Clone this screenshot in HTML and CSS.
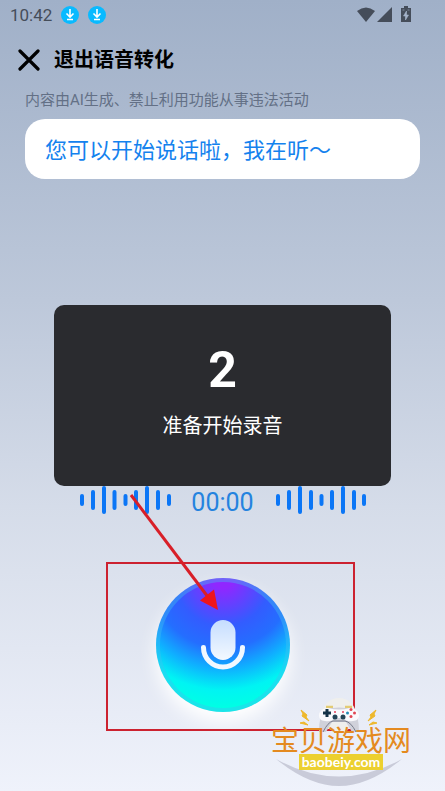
FILE: index.html
```html
<!DOCTYPE html>
<html lang="zh-CN">
<head>
    <meta charset="UTF-8">
    <meta name="viewport" content="width=device-width, initial-scale=1.0">
    <title>退出语音转化</title>
    <link rel="stylesheet" href="styles.css">
</head>
<body>
    <div class="status-bar">
        <span class="clock">10:42</span>
        <svg class="download" viewBox="0 0 18 18">
            <circle cx="9" cy="9" r="9" fill="#09baff"/>
            <path d="M9 3v7.500M5.500 7.500L9 11l3.500-3.500M6 13.500h6" fill="none" stroke="#fff" stroke-width="1.600"/>
        </svg>
        <svg class="download" viewBox="0 0 18 18">
            <circle cx="9" cy="9" r="9" fill="#09baff"/>
            <path d="M9 3v7.500M5.500 7.500L9 11l3.500-3.500M6 13.500h6" fill="none" stroke="#fff" stroke-width="1.600"/>
        </svg>
        <svg class="signals" viewBox="0 0 54 18">
            <path d="M0 5Q9-2 18 5L9 16Z" fill="#454d5a"/>
            <path d="M35 1v15H20Z" fill="#454d5a"/>
            <path d="M44 2h3V0h4v2h3v14H44Z" fill="#454d5a"/>
            <path d="M49.500 5l-3 5h2v4l3-5h-2ZM45.500 4h2M50.500 4h2" fill="#a5b4ca" stroke="#a5b4ca" stroke-width=".6"/>
        </svg>
    </div>

    <header class="title-bar">
        <button type="button" class="close" aria-label="关闭">
            <svg viewBox="0 0 22 22">
                <path d="M2 2l18 18M20 2L2 20" stroke="#000" stroke-width="3.200" stroke-linecap="round"/>
            </svg>
        </button>
        <h1>退出语音转化</h1>
    </header>

    <main>
        <p class="notice">内容由AI生成、禁止利用功能从事违法活动</p>
        <p class="bubble">您可以开始说话啦，我在听～</p>

        <div class="countdown">
            <strong>2</strong>
            <span>准备开始录音</span>
        </div>

        <div class="recorder">
            <div class="timeline">
                <svg class="wave" viewBox="0 0 92 28">
                    <path d="M3 10v8M14 6v16M25 2v24M35.500 6v16M46.500 10v8M57 6v16M68 2v24M79 6v16M90 10v8"/>
                </svg>
                <span class="timer">00:00</span>
                <svg class="wave" viewBox="0 0 92 28">
                    <path d="M4 10v8M15 6v16M26 2v24M37 6v16M47.500 10v8M58 6v16M69 2v24M80 6v16M90 10v8"/>
                </svg>
            </div>
            <button type="button" class="mic" aria-label="录音">
                <svg viewBox="0 0 44 50">
                    <defs>
                        <linearGradient id="micFill" x1="0" y1="0" x2="0" y2="1">
                            <stop offset="0" stop-color="#c5ddff"/>
                            <stop offset="1" stop-color="#f3f9ff"/>
                        </linearGradient>
                    </defs>
                    <rect x="9.500" y="0" width="25" height="40" rx="12.500" fill="url(#micFill)"/>
                    <path d="M2.500 27.500a19.500 19.500 0 0 0 39 0" fill="none" stroke="#f1f8ff" stroke-width="5" stroke-linecap="round"/>
                </svg>
            </button>
            <!-- guide: frame round the button and arrow pointing at it -->
            <svg class="guide" viewBox="0 0 250 240">
                <rect x="2" y="71" width="247" height="167" fill="none" stroke="#cc2230" stroke-width="2"/>
                <path d="M26 3l77 102" stroke="#d81f28" stroke-width="3"/>
                <path d="M113 118l-18-9.500 14-11Z" fill="#ee151c"/>
            </svg>
        </div>
    </main>

    <div class="watermark">
        <svg class="watermark-art" viewBox="0 0 140 90">
            <path d="M5 61Q68 96 131 61Q98 88 68 88Q38 88 5 61Z" fill="#c9cbd9"/>
            <circle cx="68" cy="17" r="17" fill="#efefed"/>
            <path d="M55 9h7M74 9h7" stroke="#e3cb73" stroke-width="2.500"/>
            <path d="M54 11Q68 8 82 11Q88 17 88 34H81L75 24H61L55 34H48Q48 17 54 11Z" fill="#d0d1da"/>
            <path d="M57 10Q68 13 79 10C91 11 90 23 82 23Q75 24 73 20H63Q61 24 54 23C46 23 45 11 57 10Z" fill="#fafafd"/>
            <path d="M52 34Q57 24 62 23H74Q80 24 85 34" fill="none" stroke="#777c8b"/>
            <path d="M56 11v8M52 15h8" stroke="#173448" stroke-width="3"/>
            <circle cx="64" cy="19" r="2.500" fill="#244456"/>
            <circle cx="72" cy="19" r="2.500" fill="#244456"/>
            <path d="M63 14h2M71 14h2" stroke="#e2435c" stroke-width="1.500"/>
            <circle cx="80" cy="11.500" r="1.500" fill="#e14654"/>
            <circle cx="80" cy="18.500" r="1.500" fill="#e14654"/>
            <circle cx="76.500" cy="15" r="1.500" fill="#268cb5"/>
            <circle cx="83.500" cy="15" r="1.500" fill="#e14654"/>
            <path d="M30 12l6 5-1 2 3 4-7-5 1-2ZM29 25l4-1 4 3-4-1ZM105 12l-6 5 1 2-3 4 7-5-1-2ZM106 25l-4-1-4 3 4-1Z" fill="#eeb82b" stroke="#eeb82b"/>
        </svg>
        <span class="site-name">宝贝游戏网</span>
        <span class="site-url">baobeiy.com</span>
    </div>
</body>
</html>
```
FILE: styles.css
```css
* {
    box-sizing: border-box;
}
html {
    min-height: 100%;
    background: linear-gradient(#a0b0c8, #bdc8da 38%, #d5dce9 64%, #eff2fb);
}
body {
    position: relative;
    min-height: 100vh;
    margin: 0;
    font-family: Roboto, "Noto Sans CJK SC", sans-serif;
}
h1, p {
    margin: 0;
}
button {
    padding: 0;
    border: none;
    background: none;
    cursor: pointer;
}
svg {
    display: block;
}
.status-bar {
    display: flex;
    align-items: center;
    gap: 9px;
    height: 30px;
    padding: 0 34px 0 10px;
}
.clock {
    font-size: 17px;
    color: #454d5a;
}
.download {
    width: 18px;
    height: 18px;
}
.signals {
    width: 54px;
    height: 18px;
    margin-left: auto;
}
.title-bar {
    display: flex;
    align-items: center;
    gap: 14px;
    height: 60px;
    padding: 0 18px;
}
.close svg {
    width: 22px;
    height: 22px;
}
h1 {
    font-size: 20px;
    line-height: 30px;
    font-weight: bold;
}
main {
    padding: 0 25px;
}
.notice {
    font-size: 15px;
    line-height: 20px;
    color: #637086;
}
.bubble {
    margin-top: 9px;
    padding: 16px 20px 12px;
    border-radius: 20px;
    background: #fff;
    font-size: 22px;
    line-height: 32px;
    color: #1482ee;
}
.countdown {
    display: flex;
    flex-direction: column;
    align-items: center;
    margin: 126px 29px 0;
    padding: 36px 0 44px;
    border-radius: 10px;
    background: #2a2b2f;
    color: #fff;
}
.countdown strong {
    font-size: 50px;
    line-height: 58px;
}
.countdown span {
    margin-top: 12px;
    font-size: 20px;
    line-height: 31px;
}
.recorder {
    position: relative;
    display: flex;
    flex-direction: column;
    align-items: center;
}
.timeline {
    display: flex;
    align-items: center;
    gap: 20px;
    height: 28px;
}
.wave {
    width: 92px;
    height: 28px;
    fill: none;
    stroke: #0b76f6;
    stroke-width: 4;
    stroke-linecap: round;
}
.timer {
    margin-top: 4px;
    font-size: 25px;
    color: #2583df;
}
.mic {
    display: flex;
    align-items: center;
    justify-content: center;
    width: 134px;
    height: 134px;
    margin-top: 64px;
    border: 4px solid rgba(65, 190, 240, 0.4);
    border-radius: 50%;
    background: radial-gradient(circle at 50% 0, #9027ff 10px, #335cff 48px, #246eff 70px, #0fb0ff 91px, #00f4f3 112px, #00ffe4 130px) border-box;
    box-shadow: 0 10px 18px #fff;
}
.mic svg {
    width: 44px;
    height: 50px;
}
.guide {
    position: absolute;
    top: 6px;
    left: 50%;
    width: 250px;
    height: 240px;
    margin-left: -118px;
    pointer-events: none;
}
.watermark {
    position: absolute;
    right: 34px;
    bottom: 3px;
    display: flex;
    flex-direction: column;
    align-items: center;
    width: 140px;
    height: 90px;
    padding-top: 31px;
}
.watermark-art {
    position: absolute;
    top: 0;
    left: 0;
    width: 140px;
    height: 90px;
}
.site-name {
    position: relative;
    font-size: 28px;
    line-height: 25px;
    color: #e48a20;
}
.site-url {
    position: relative;
    padding: 0 3px;
    background: #ecd02f;
    font-family: Lato, sans-serif;
    font-size: 14px;
    line-height: 16px;
    font-weight: bold;
    color: #fff;
}
```
